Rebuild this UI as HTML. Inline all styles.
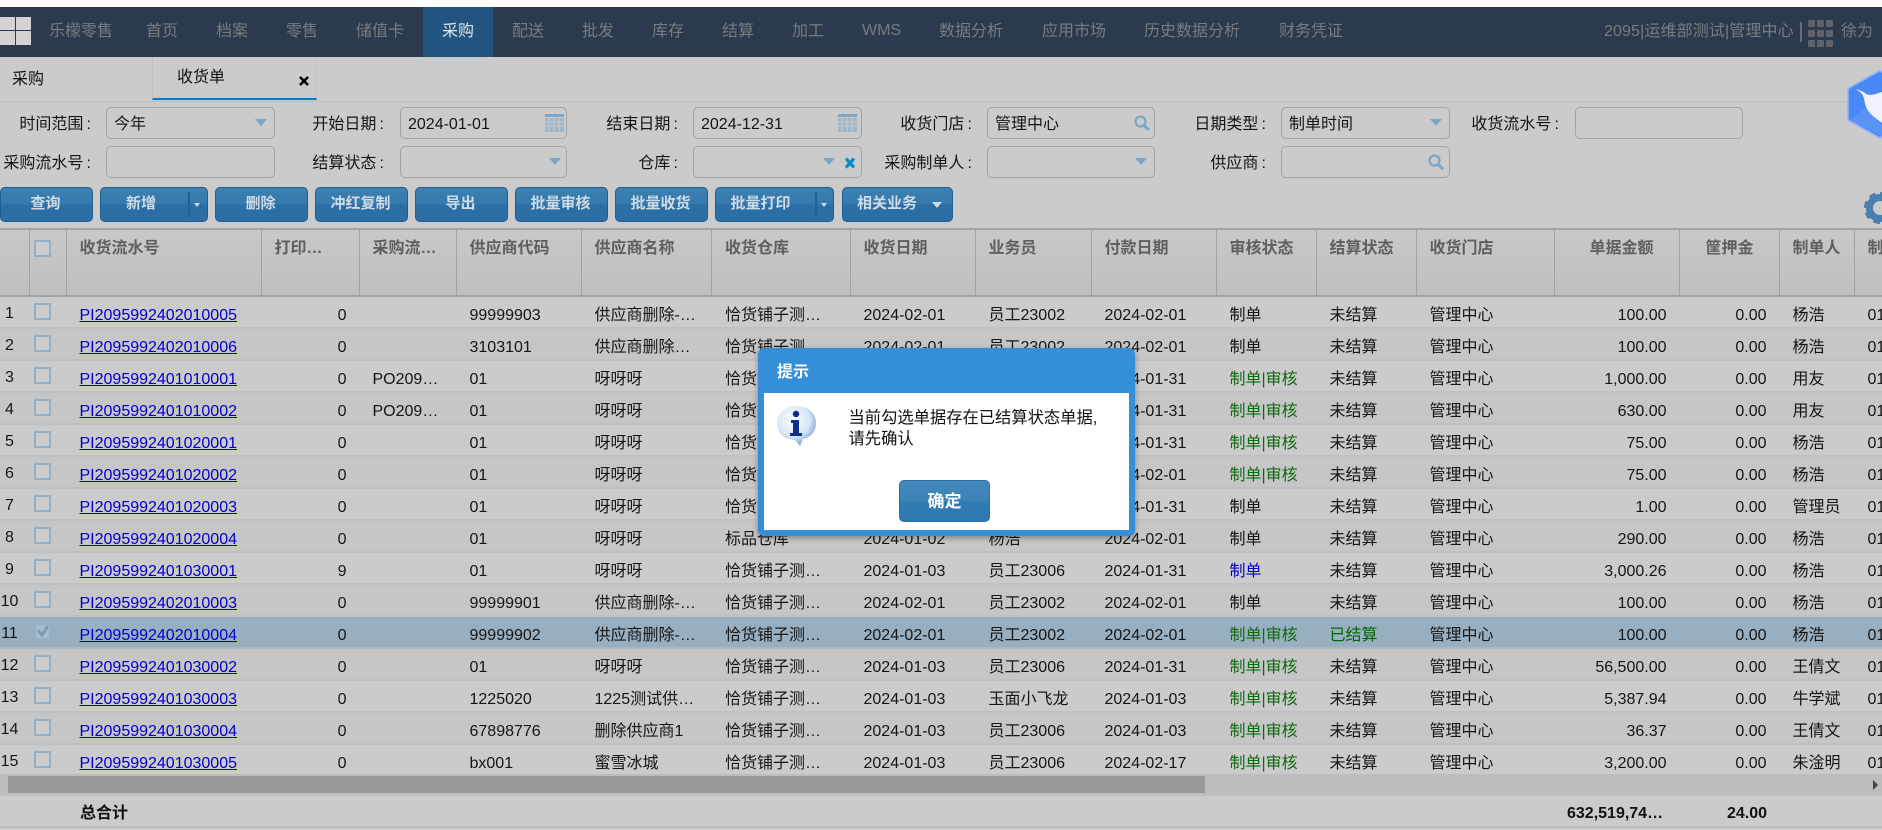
<!DOCTYPE html>
<html lang="zh"><head><meta charset="utf-8"><title>收货单</title>
<style>
*{box-sizing:border-box}
html,body{margin:0;padding:0;width:1882px;height:830px;overflow:hidden;background:#cbcbcb}
body{position:relative;font:16px/20px "Liberation Sans","Noto Sans CJK SC",sans-serif;color:#111}
.a{position:absolute;white-space:nowrap}
#top{position:absolute;left:0;top:0;width:1882px;height:7px;background:#fff}
#nav{position:absolute;left:0;top:7px;width:1882px;height:50px;background:#2b3a4c}
#nav span{position:absolute;top:15px;color:#777c82;white-space:nowrap}
#act{position:absolute;left:423px;top:0;width:70px;height:50px;background:#215580}
.lq{position:absolute;background:#d3d3d3}
.lb{position:absolute;width:100px;text-align:right;white-space:nowrap;color:#151515;margin-top:1px}
.in{position:absolute;height:32px;border:1px solid #a4a4a4;border-radius:5px;padding:7px 7px 3px;color:#151515}
.ar{position:absolute;width:0;height:0;border-left:6px solid transparent;border-right:6px solid transparent;border-top:7px solid #7ba6c6}
.btn{position:absolute;top:187px;height:35px;border:1px solid #1f5e90;border-radius:5px;background:linear-gradient(#3d80b1 0,#357aad 48%,#2a6ea5 52%,#2b6fa6 100%);color:#cfdbe6;font-weight:bold;font-size:15px;line-height:32px;text-align:center;white-space:nowrap}
.dv{position:absolute;top:4px;width:2px;height:25px;background:#235f90}
.sm{position:absolute;top:15px;width:0;height:0;border-left:3px solid transparent;border-right:3px solid transparent;border-top:4px solid #cfdbe6}
#tw{position:absolute;left:0;top:228px;width:1882px;height:546px;overflow:hidden}
table{border-collapse:separate;border-spacing:0;table-layout:fixed;width:1935px}
th{height:69px;background:linear-gradient(#c8c8c8,#c0c0c0);border-top:2px solid #a2a2a2;border-bottom:2px solid #a2a2a2;border-right:1px solid #a2a2a2;font-weight:bold;color:#5f5f5f;text-align:left;vertical-align:top;padding:9px 0 0 13px;overflow:hidden;white-space:nowrap}
th.r{text-align:right;padding:9px 25px 0 0}
td{height:32px;padding:7px 13px 0;border-bottom:2px solid #c0c0c0;overflow:hidden;white-space:nowrap;color:#151515}
tr:nth-child(odd) td{background:#cbcbcb}
tr:nth-child(even) td{background:#c6c6c6}
tr.s td{background:#98afc1!important;border-bottom-color:#a8b8c5}
td.n{padding:6px 11px 2px 0;text-align:center}
td.c,th.c{padding-left:4px;padding-right:0}
td.r{text-align:right}
td.l{text-decoration:underline;color:#0000cc}
i.k{display:block;width:17px;height:17px;border:2px solid #92b0c8;background:#cdcdcd;position:relative;top:-4px}
tr.s i.k{background:#a9bccb}
.g{color:#0e6a0e}.b{color:#0000cc}.g2{color:#006600}
#mask{position:absolute;left:758px;top:348px;width:377px;height:188px;background:#348fd8;border-radius:6px;box-shadow:0 2px 6px rgba(0,0,0,.35)}
#mi{position:absolute;left:6px;top:45px;width:365px;height:137px;background:#fff}
#okb{position:absolute;left:141px;top:132px;width:91px;height:42px;border:1px solid #2a6fa6;border-radius:5px;background:linear-gradient(#4389bb 0,#3c82b6 50%,#307bb2 52%,#2f79b1 100%);color:#fff;font-weight:bold;font-size:17px;line-height:42px;text-align:center}
</style></head><body>
<div id="top"></div>
<div id="nav">
<div class="lq" style="left:0;top:10px;width:15px;height:13px"></div>
<div class="lq" style="left:16px;top:10px;width:15px;height:13px"></div>
<div class="lq" style="left:0;top:24px;width:15px;height:14px"></div>
<div class="lq" style="left:16px;top:24px;width:15px;height:14px"></div>
<div id="act"></div>
<span style="left:49px">乐檬零售</span><span style="left:146px">首页</span><span style="left:216px">档案</span><span style="left:286px">零售</span><span style="left:356px">储值卡</span><span style="left:442px;color:#e0e4e8">采购</span><span style="left:512px">配送</span><span style="left:582px">批发</span><span style="left:652px">库存</span><span style="left:722px">结算</span><span style="left:792px">加工</span><span style="left:862px;top:14px">WMS</span><span style="left:939px">数据分析</span><span style="left:1042px">应用市场</span><span style="left:1144px">历史数据分析</span><span style="left:1279px">财务凭证</span>
<span style="left:1604px;letter-spacing:.12px">2095|运维部测试|管理中心</span>
<div style="position:absolute;left:1800px;top:15px;width:2px;height:20px;background:#666c72"></div>
<svg style="position:absolute;left:1808px;top:13px" width="26" height="29" fill="#5f646a"><rect x="0" y="0" width="7" height="7" rx="1"/><rect x="9" y="0" width="7" height="7" rx="1"/><rect x="18" y="0" width="7" height="7" rx="1"/><rect x="0" y="10" width="7" height="7" rx="1"/><rect x="9" y="10" width="7" height="7" rx="1"/><rect x="18" y="10" width="7" height="7" rx="1"/><rect x="0" y="20" width="7" height="7" rx="1"/><rect x="9" y="20" width="7" height="7" rx="1"/><rect x="18" y="20" width="7" height="7" rx="1"/></svg>
<span style="left:1841px">徐为</span>
</div>

<!-- tabs -->
<div class="a" style="left:12px;top:70px">采购</div>
<div class="a" style="left:152px;top:57px;width:165px;height:43px;border-left:1px solid #c2c2c2;border-right:1px solid #c2c2c2;border-bottom:2px solid #0a78c8"></div>
<div class="a" style="left:177px;top:68px">收货单</div>
<svg class="a" style="left:299px;top:76px" width="10" height="10"><path d="M1 1L9 9M9 1L1 9" stroke="#000" stroke-width="2.6"/></svg>
<div class="a" style="left:0;top:101px;width:1882px;height:1px;background:#bfbfbf"></div>

<!-- hex logo -->
<svg class="a" style="left:1840px;top:64px" width="42" height="80">
<polygon points="40,6.5 8,24.5 8,56 40,74 60,60 60,20" fill="#4a88f8" stroke="#8fb6f8" stroke-width="1.6" stroke-linejoin="round"/>
<polygon points="9,56 26,44 42,62 42,72" fill="#5a93f8"/>
<path d="M15 25C20 26 24 28 26 30C30 32 36 30 42 28L42 59C35 54 30 50 27 45C24 40 25 34 22 30C20 28 18 26 15 25Z" fill="#eef3fe"/>
</svg>

<!-- form -->
<div class="lb" style="left:-9px;top:114px">时间范围&thinsp;:</div>
<div class="in" style="left:106px;top:107px;width:169px">今年</div><div class="ar" style="left:255px;top:119px"></div>
<div class="lb" style="left:284px;top:114px">开始日期&thinsp;:</div>
<div class="in" style="left:400px;top:107px;width:167px">2024-01-01</div>
<svg class="a" style="left:545px;top:114px" width="19" height="18" fill="#7ba6c6"><rect width="19" height="3"/><path d="M0 4h19v14H0z" fill="#7ba6c6" opacity=".55"/><path d="M0 8h19M0 12h19M4 4v14M9 4v14M14 4v14" stroke="#cbcbcb" stroke-width="1" fill="none"/></svg>
<div class="lb" style="left:578px;top:114px">结束日期&thinsp;:</div>
<div class="in" style="left:693px;top:107px;width:169px">2024-12-31</div>
<svg class="a" style="left:838px;top:114px" width="19" height="18" fill="#7ba6c6"><rect width="19" height="3"/><path d="M0 4h19v14H0z" fill="#7ba6c6" opacity=".55"/><path d="M0 8h19M0 12h19M4 4v14M9 4v14M14 4v14" stroke="#cbcbcb" stroke-width="1" fill="none"/></svg>
<div class="lb" style="left:872px;top:114px">收货门店&thinsp;:</div>
<div class="in" style="left:987px;top:107px;width:168px">管理中心</div>
<svg class="a" style="left:1134px;top:115px" width="17" height="16"><circle cx="6.5" cy="6.5" r="5" fill="none" stroke="#7ba6c6" stroke-width="2.2"/><path d="M10 10.5L15 15" stroke="#7ba6c6" stroke-width="3"/></svg>
<div class="lb" style="left:1166px;top:114px">日期类型&thinsp;:</div>
<div class="in" style="left:1281px;top:107px;width:169px">制单时间</div><div class="ar" style="left:1430px;top:119px"></div>
<div class="lb" style="left:1459px;top:114px">收货流水号&thinsp;:</div>
<div class="in" style="left:1575px;top:107px;width:168px"></div>

<div class="lb" style="left:-9px;top:153px">采购流水号&thinsp;:</div>
<div class="in" style="left:106px;top:146px;width:169px"></div>
<div class="lb" style="left:284px;top:153px">结算状态&thinsp;:</div>
<div class="in" style="left:400px;top:146px;width:167px"></div><div class="ar" style="left:549px;top:158px"></div>
<div class="lb" style="left:578px;top:153px">仓库&thinsp;:</div>
<div class="in" style="left:693px;top:146px;width:169px"></div><div class="ar" style="left:823px;top:158px"></div>
<svg class="a" style="left:844px;top:157px" width="12" height="12"><path d="M2 1.5L10 10.5M10 1.5L2 10.5" stroke="#0f8cc8" stroke-width="3.2"/></svg>
<div class="lb" style="left:872px;top:153px">采购制单人&thinsp;:</div>
<div class="in" style="left:987px;top:146px;width:168px"></div><div class="ar" style="left:1135px;top:158px"></div>
<div class="lb" style="left:1166px;top:153px">供应商&thinsp;:</div>
<div class="in" style="left:1281px;top:146px;width:169px"></div>
<svg class="a" style="left:1428px;top:154px" width="17" height="16"><circle cx="6.5" cy="6.5" r="5" fill="none" stroke="#7ba6c6" stroke-width="2.2"/><path d="M10 10.5L15 15" stroke="#7ba6c6" stroke-width="3"/></svg>

<!-- buttons -->
<div class="btn" style="left:0;width:93px;padding-right:2px">查询</div>
<div class="btn" style="left:100px;width:108px;padding-right:26px">新增<div class="dv" style="left:87px"></div><div class="sm" style="left:93px"></div></div>
<div class="btn" style="left:215px;width:93px;padding-right:2px">删除</div>
<div class="btn" style="left:315px;width:93px;padding-right:2px">冲红复制</div>
<div class="btn" style="left:415px;width:93px;padding-right:2px">导出</div>
<div class="btn" style="left:515px;width:93px;padding-right:2px">批量审核</div>
<div class="btn" style="left:615px;width:93px;padding-right:2px">批量收货</div>
<div class="btn" style="left:715px;width:119px;padding-right:28px">批量打印<div class="dv" style="left:99px"></div><div class="sm" style="left:105px"></div></div>
<div class="btn" style="left:842px;width:111px;padding-right:21px">相关业务<div class="sm" style="left:89px;top:14px;border-left-width:5px;border-right-width:5px;border-top-width:6px"></div></div>
<svg class="a" style="left:1862px;top:190px" width="20" height="36"><circle cx="18" cy="18" r="10.5" fill="none" stroke="#4a7fae" stroke-width="7"/><circle cx="18" cy="18" r="14" fill="none" stroke="#4a7fae" stroke-width="4" stroke-dasharray="6.5 4.5"/></svg>

<!-- table -->
<div id="tw"><table>
<colgroup><col style="width:30px"><col style="width:36.5px"><col style="width:195px"><col style="width:98px"><col style="width:97px"><col style="width:125px"><col style="width:130.5px"><col style="width:138.5px"><col style="width:125px"><col style="width:116px"><col style="width:125px"><col style="width:100px"><col style="width:100px"><col style="width:138px"><col style="width:125px"><col style="width:100px"><col style="width:75px"><col style="width:80.5px"></colgroup>
<thead><tr><th></th><th class="c"><i class="k" style="top:1px"></i></th><th>收货流水号</th><th>打印…</th><th>采购流…</th><th>供应商代码</th><th>供应商名称</th><th>收货仓库</th><th>收货日期</th><th>业务员</th><th>付款日期</th><th>审核状态</th><th>结算状态</th><th>收货门店</th><th class="r">单据金额</th><th class="r">筐押金</th><th>制单人</th><th>制单时间</th></tr></thead>
<tbody>
<tr><td class="n">1</td><td class="c"><i class="k"></i></td><td class="l">PI2095992402010005</td><td class="r">0</td><td></td><td>99999903</td><td>供应商删除-…</td><td>恰货铺子测…</td><td>2024-02-01</td><td>员工23002</td><td>2024-02-01</td><td>制单</td><td>未结算</td><td>管理中心</td><td class="r">100.00</td><td class="r">0.00</td><td>杨浩</td><td>01</td></tr>
<tr><td class="n">2</td><td class="c"><i class="k"></i></td><td class="l">PI2095992402010006</td><td class="r">0</td><td></td><td>3103101</td><td>供应商删除…</td><td>恰货铺子测…</td><td>2024-02-01</td><td>员工23002</td><td>2024-02-01</td><td>制单</td><td>未结算</td><td>管理中心</td><td class="r">100.00</td><td class="r">0.00</td><td>杨浩</td><td>01</td></tr>
<tr><td class="n">3</td><td class="c"><i class="k"></i></td><td class="l">PI2095992401010001</td><td class="r">0</td><td>PO209…</td><td>01</td><td>呀呀呀</td><td>恰货铺子测…</td><td>2024-01-01</td><td>员工23001</td><td>2024-01-31</td><td class="g">制单|审核</td><td>未结算</td><td>管理中心</td><td class="r">1,000.00</td><td class="r">0.00</td><td>用友</td><td>01</td></tr>
<tr><td class="n">4</td><td class="c"><i class="k"></i></td><td class="l">PI2095992401010002</td><td class="r">0</td><td>PO209…</td><td>01</td><td>呀呀呀</td><td>恰货铺子测…</td><td>2024-01-01</td><td>员工23001</td><td>2024-01-31</td><td class="g">制单|审核</td><td>未结算</td><td>管理中心</td><td class="r">630.00</td><td class="r">0.00</td><td>用友</td><td>01</td></tr>
<tr><td class="n">5</td><td class="c"><i class="k"></i></td><td class="l">PI2095992401020001</td><td class="r">0</td><td></td><td>01</td><td>呀呀呀</td><td>恰货铺子测…</td><td>2024-01-02</td><td>员工23001</td><td>2024-01-31</td><td class="g">制单|审核</td><td>未结算</td><td>管理中心</td><td class="r">75.00</td><td class="r">0.00</td><td>杨浩</td><td>01</td></tr>
<tr><td class="n">6</td><td class="c"><i class="k"></i></td><td class="l">PI2095992401020002</td><td class="r">0</td><td></td><td>01</td><td>呀呀呀</td><td>恰货铺子测…</td><td>2024-01-02</td><td>员工23001</td><td>2024-02-01</td><td class="g">制单|审核</td><td>未结算</td><td>管理中心</td><td class="r">75.00</td><td class="r">0.00</td><td>杨浩</td><td>01</td></tr>
<tr><td class="n">7</td><td class="c"><i class="k"></i></td><td class="l">PI2095992401020003</td><td class="r">0</td><td></td><td>01</td><td>呀呀呀</td><td>恰货铺子测…</td><td>2024-01-02</td><td>员工23001</td><td>2024-01-31</td><td>制单</td><td>未结算</td><td>管理中心</td><td class="r">1.00</td><td class="r">0.00</td><td>管理员</td><td>01</td></tr>
<tr><td class="n">8</td><td class="c"><i class="k"></i></td><td class="l">PI2095992401020004</td><td class="r">0</td><td></td><td>01</td><td>呀呀呀</td><td>标品仓库</td><td>2024-01-02</td><td>杨浩</td><td>2024-02-01</td><td>制单</td><td>未结算</td><td>管理中心</td><td class="r">290.00</td><td class="r">0.00</td><td>杨浩</td><td>01</td></tr>
<tr><td class="n">9</td><td class="c"><i class="k"></i></td><td class="l">PI2095992401030001</td><td class="r">9</td><td></td><td>01</td><td>呀呀呀</td><td>恰货铺子测…</td><td>2024-01-03</td><td>员工23006</td><td>2024-01-31</td><td class="b">制单</td><td>未结算</td><td>管理中心</td><td class="r">3,000.26</td><td class="r">0.00</td><td>杨浩</td><td>01</td></tr>
<tr><td class="n">10</td><td class="c"><i class="k"></i></td><td class="l">PI2095992402010003</td><td class="r">0</td><td></td><td>99999901</td><td>供应商删除-…</td><td>恰货铺子测…</td><td>2024-02-01</td><td>员工23002</td><td>2024-02-01</td><td>制单</td><td>未结算</td><td>管理中心</td><td class="r">100.00</td><td class="r">0.00</td><td>杨浩</td><td>01</td></tr>
<tr class="s"><td class="n">11</td><td class="c"><i class="k"><svg style="position:absolute;left:0;top:-1px" width="14" height="14"><path d="M2 6L6 11L12 2" fill="none" stroke="#7e9cb4" stroke-width="3"/></svg></i></td><td class="l">PI2095992402010004</td><td class="r">0</td><td></td><td>99999902</td><td>供应商删除-…</td><td>恰货铺子测…</td><td>2024-02-01</td><td>员工23002</td><td>2024-02-01</td><td class="g">制单|审核</td><td class="g2">已结算</td><td>管理中心</td><td class="r">100.00</td><td class="r">0.00</td><td>杨浩</td><td>01</td></tr>
<tr><td class="n">12</td><td class="c"><i class="k"></i></td><td class="l">PI2095992401030002</td><td class="r">0</td><td></td><td>01</td><td>呀呀呀</td><td>恰货铺子测…</td><td>2024-01-03</td><td>员工23006</td><td>2024-01-31</td><td class="g">制单|审核</td><td>未结算</td><td>管理中心</td><td class="r">56,500.00</td><td class="r">0.00</td><td>王倩文</td><td>01</td></tr>
<tr><td class="n">13</td><td class="c"><i class="k"></i></td><td class="l">PI2095992401030003</td><td class="r">0</td><td></td><td>1225020</td><td>1225测试供…</td><td>恰货铺子测…</td><td>2024-01-03</td><td>玉面小飞龙</td><td>2024-01-03</td><td class="g">制单|审核</td><td>未结算</td><td>管理中心</td><td class="r">5,387.94</td><td class="r">0.00</td><td>牛学斌</td><td>01</td></tr>
<tr><td class="n">14</td><td class="c"><i class="k"></i></td><td class="l">PI2095992401030004</td><td class="r">0</td><td></td><td>67898776</td><td>删除供应商1</td><td>恰货铺子测…</td><td>2024-01-03</td><td>员工23006</td><td>2024-01-03</td><td class="g">制单|审核</td><td>未结算</td><td>管理中心</td><td class="r">36.37</td><td class="r">0.00</td><td>王倩文</td><td>01</td></tr>
<tr><td class="n">15</td><td class="c"><i class="k"></i></td><td class="l">PI2095992401030005</td><td class="r">0</td><td></td><td>bx001</td><td>蜜雪冰城</td><td>恰货铺子测…</td><td>2024-01-03</td><td>员工23006</td><td>2024-02-17</td><td class="g">制单|审核</td><td>未结算</td><td>管理中心</td><td class="r">3,200.00</td><td class="r">0.00</td><td>朱淦明</td><td>01</td></tr>
</tbody></table></div>

<!-- scrollbar -->
<div class="a" style="left:0;top:774px;width:1882px;height:21px;background:#bdbdbd"></div>
<div class="a" style="left:8px;top:776px;width:1197px;height:17px;background:#999"></div>
<div class="a" style="left:1873px;top:780px;width:0;height:0;border-top:5px solid transparent;border-bottom:5px solid transparent;border-left:5px solid #444"></div>
<!-- footer -->
<div class="a" style="left:0;top:795px;width:1882px;height:33px;background:#cbcbcb;border-top:1px solid #c2c2c2;border-bottom:2px solid #bbb"></div>
<div class="a" style="left:80px;top:804px;font-weight:bold">总合计</div>
<div class="a" style="left:1567px;top:804px;font-weight:bold">632,519,74…</div>
<div class="a" style="left:1727px;top:804px;font-weight:bold">24.00</div>

<!-- dialog -->
<div id="mask">
<div class="a" style="left:19px;top:15px;color:#fff;font-weight:bold">提示</div>
<div id="mi"></div>
<svg class="a" style="left:18px;top:57px" width="42" height="42"><defs><radialGradient id="ig" cx=".42" cy=".35" r=".7"><stop offset="0" stop-color="#fff"/><stop offset=".6" stop-color="#d6e6f6"/><stop offset="1" stop-color="#6f97c4"/></radialGradient></defs><path d="M21 1C32 1 40 8 40 18C40 27 34 33 27 34L24 41L19 35C9 35 1 28 1 18C1 8 10 1 21 1Z" fill="url(#ig)"/><circle cx="20" cy="9" r="3.2" fill="#0f2f8a"/><path d="M15 15h8v13h3v3H14v-3h3V18h-2z" fill="#0f2f8a"/></svg>
<div class="a" style="left:90.5px;top:59.5px;font-size:16.3px;line-height:21px;color:#111">当前勾选单据存在已结算状态单据,<br>请先确认</div>
<div id="okb">确定</div>
</div>
</body></html>
